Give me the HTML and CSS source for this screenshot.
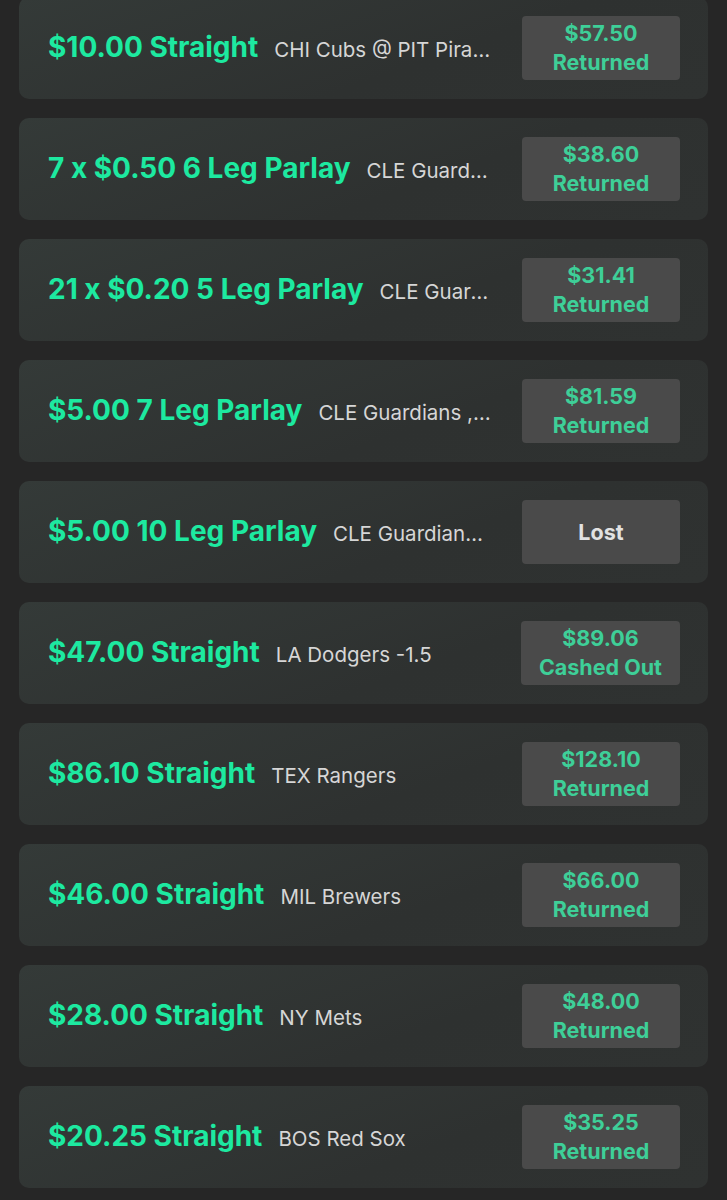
FILE: index.html
```html
<!DOCTYPE html>
<html lang="en">

<head>
    <meta charset="UTF-8">
    <meta name="viewport" content="width=device-width, initial-scale=1.0">
    <title>Settled Bets</title>
    <link rel="stylesheet" href="styles.css">
</head>

<body>
    <main class="bets">
        <div class="bet">
            <span class="bet-title">$10.00 Straight</span>
            <span class="bet-desc">CHI Cubs @ PIT Pirates</span>
            <div class="bet-result"><span>$57.50</span><span>Returned</span></div>
        </div>
        <div class="bet">
            <span class="bet-title">7 x $0.50 6 Leg Parlay</span>
            <span class="bet-desc">CLE Guardians , DET Tigers</span>
            <div class="bet-result"><span>$38.60</span><span>Returned</span></div>
        </div>
        <div class="bet">
            <span class="bet-title">21 x $0.20 5 Leg Parlay</span>
            <span class="bet-desc">CLE Guardians , DET Tigers</span>
            <div class="bet-result"><span>$31.41</span><span>Returned</span></div>
        </div>
        <div class="bet">
            <span class="bet-title">$5.00 7 Leg Parlay</span>
            <span class="bet-desc">CLE Guardians , DET Tigers</span>
            <div class="bet-result"><span>$81.59</span><span>Returned</span></div>
        </div>
        <div class="bet">
            <span class="bet-title">$5.00 10 Leg Parlay</span>
            <span class="bet-desc">CLE Guardians , DET Tigers</span>
            <div class="bet-result lost"><span>Lost</span></div>
        </div>
        <div class="bet">
            <span class="bet-title">$47.00 Straight</span>
            <span class="bet-desc">LA Dodgers -1.5</span>
            <div class="bet-result"><span>$89.06</span><span>Cashed Out</span></div>
        </div>
        <div class="bet">
            <span class="bet-title">$86.10 Straight</span>
            <span class="bet-desc">TEX Rangers</span>
            <div class="bet-result"><span>$128.10</span><span>Returned</span></div>
        </div>
        <div class="bet">
            <span class="bet-title">$46.00 Straight</span>
            <span class="bet-desc">MIL Brewers</span>
            <div class="bet-result"><span>$66.00</span><span>Returned</span></div>
        </div>
        <div class="bet">
            <span class="bet-title">$28.00 Straight</span>
            <span class="bet-desc">NY Mets</span>
            <div class="bet-result"><span>$48.00</span><span>Returned</span></div>
        </div>
        <div class="bet">
            <span class="bet-title">$20.25 Straight</span>
            <span class="bet-desc">BOS Red Sox</span>
            <div class="bet-result"><span>$35.25</span><span>Returned</span></div>
        </div>
    </main>
</body>

</html>
```

FILE: styles.css
```css
body {
    background: #262626;
    margin: 0;
    padding: 0;
    font-family: Inter, "Liberation Sans", sans-serif;
}

.bets {
    display: flex;
    flex-direction: column;
    gap: 19px;
    padding: 0 19px;
    margin-top: -3px;
}

.bet {
    display: flex;
    align-items: center;
    height: 102px;
    box-sizing: border-box;
    padding: 0 28px 0 29px;
    border-radius: 10px;
    background: linear-gradient(160deg, #343a38, #2e3130 60%, #2f3231);
}

.bet-title {
    color: #1de9a0;
    font-size: 28px;
    font-weight: 700;
    white-space: nowrap;
    margin-top: -3px;
}

.bet-desc {
    flex: 1;
    min-width: 0;
    margin: 2px 30px 0 16px;
    color: #d6d6d6;
    font-size: 20.5px;
    white-space: nowrap;
    overflow: hidden;
    text-overflow: ellipsis;
}

.bet-result {
    display: flex;
    flex-direction: column;
    align-items: center;
    justify-content: center;
    min-width: 158px;
    height: 64px;
    box-sizing: border-box;
    padding: 0 18px;
    border-radius: 4px;
    background: #4a4a4a;
    color: #3ecf98;
    font-size: 21.5px;
    font-weight: 700;
    line-height: 29px;
}

.bet-result.lost {
    color: #e2e2e2;
}
```
